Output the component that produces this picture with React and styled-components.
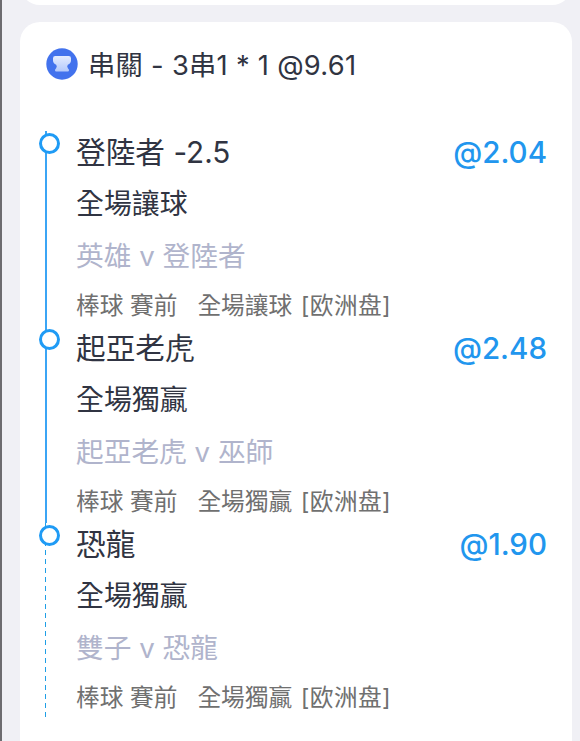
import styled, { createGlobalStyle } from "styled-components";

const GlobalStyle = createGlobalStyle`
  * {
    box-sizing: border-box;
  }
  body {
    margin: 0;
    background-color: #f0f0f5;
    font-family: Inter, "Noto Sans CJK TC", sans-serif;
    font-feature-settings: "calt" 0;
    color: #303442;
  }
`;

const StyledPage = styled.main`
  height: 741px;
  overflow: hidden;
  border-left: 2px solid #6d6c70;
  padding: 0 8px 0 18px;
  display: flex;
  flex-direction: column;
  gap: 17px;
`;

const StyledPreviousCard = styled.div`
  flex: none;
  height: 5px;
  overflow: hidden;
  display: flex;
  align-items: flex-end;

  &::after {
    content: "";
    flex: 1;
    height: 60px;
    border-radius: 20px;
    background-color: white;
  }
`;

const StyledCard = styled.section`
  flex: 1;
  background-color: white;
  border-radius: 20px 20px 0 0;
  padding: 20px 25px 0;
`;

const StyledHeader = styled.header`
  height: 44px;
  margin-bottom: 45px;
  padding-left: 1px;
  display: flex;
  align-items: center;
  gap: 10px;

  & svg {
    flex: none;
  }
`;

const StyledHeading = styled.h1`
  margin: 0;
  padding-top: 3px;
  font-size: 27.3px;
  font-weight: 400;
  line-height: 41px;
  letter-spacing: 0.28px;
`;

const StyledLegs = styled.ul`
  margin: 0;
  padding: 0;
  list-style: none;
`;

const StyledLeg = styled.li`
  position: relative;
  height: 196px;
  padding: 1px 0 0 31px;
  background: ${(props) =>
    props.$last
      ? "repeating-linear-gradient(#1f9fe6 0 5px, transparent 5px 9px) 0 0 / 1px 100% no-repeat"
      : "linear-gradient(#3ba5f5, #3ba5f5) 0 0 / 2px 100% no-repeat"};
`;

const StyledDot = styled.span`
  position: absolute;
  top: 2px;
  left: -6px;
  width: 21px;
  height: 21px;
  border: 3px solid #1f9bf5;
  border-radius: 50%;
  background-color: white;
`;

const StyledTitleRow = styled.div`
  display: flex;
  justify-content: space-between;
  height: 42px;
  font-size: 29.7px;
  line-height: 40px;
`;

const StyledOdds = styled.span`
  color: #2196ee;
  font-size: 29.5px;
  font-weight: 500;
`;

const StyledMarket = styled.div`
  height: 42px;
  margin-top: 9px;
  font-size: 27.9px;
  line-height: 42px;
`;

const StyledTeams = styled.div`
  height: 44px;
  margin-top: 9px;
  color: #b0b4cc;
  font-size: 27.7px;
  line-height: 44px;
`;

const StyledMeta = styled.div`
  height: 44px;
  margin-top: 6px;
  color: #707070;
  font-size: 23.7px;
  line-height: 44px;
  white-space: pre;
`;

const StyledMarketType = styled.span`
  margin-left: 2px;
  font-family: Inter, "Noto Sans CJK SC", sans-serif;
  letter-spacing: 0.4px;
`;

const legs = [
  {
    pick: "登陸者 -2.5",
    odds: "2.04",
    market: "全場讓球",
    teams: "英雄 v 登陸者",
  },
  {
    pick: "起亞老虎",
    odds: "2.48",
    market: "全場獨贏",
    teams: "起亞老虎 v 巫師",
  },
  {
    pick: "恐龍",
    odds: "1.90",
    market: "全場獨贏",
    teams: "雙子 v 恐龍",
  },
];

function ParlayIcon() {
  return (
    <svg width="32" height="32" viewBox="0 0 32 32">
      <defs>
        <linearGradient id="cup" x1="0" y1="0" x2="0" y2="1">
          <stop offset="0" stopColor="#e4ecff" />
          <stop offset="1" stopColor="#b4c9fb" />
        </linearGradient>
      </defs>
      <circle cx="16" cy="16" r="15.7" fill="#4272ed" />
      <path
        d="M9.3 8H22.7Q25 8 25 10.3V12.6Q25 15.5 21.8 16.8Q20.5 18.3 22 20.4Q23 21 23 22.2Q23 23.4 21.8 23.4H10.2Q9 23.4 9 22.2Q9 21 10 20.4Q11.5 18.3 10.2 16.8Q7 15.5 7 12.6V10.3Q7 8 9.3 8Z"
        fill="url(#cup)"
      />
    </svg>
  );
}

function Leg({ leg, last }) {
  return (
    <StyledLeg $last={last}>
      <StyledDot />
      <StyledTitleRow>
        <span>{leg.pick}</span>
        <StyledOdds>@{leg.odds}</StyledOdds>
      </StyledTitleRow>
      <StyledMarket>{leg.market}</StyledMarket>
      <StyledTeams>{leg.teams}</StyledTeams>
      <StyledMeta>
        {`棒球 賽前   ${leg.market} `}
        <StyledMarketType>[欧洲盘]</StyledMarketType>
      </StyledMeta>
    </StyledLeg>
  );
}

function App() {
  return (
    <>
      <GlobalStyle />
      <StyledPage>
        <StyledPreviousCard />
        <StyledCard>
          <StyledHeader>
            <ParlayIcon />
            <StyledHeading>串關 - 3串1 * 1 @9.61</StyledHeading>
          </StyledHeader>
          <StyledLegs>
            {legs.map((leg, i) => (
              <Leg key={leg.pick} leg={leg} last={i === legs.length - 1} />
            ))}
          </StyledLegs>
        </StyledCard>
      </StyledPage>
    </>
  );
}

export default App;
